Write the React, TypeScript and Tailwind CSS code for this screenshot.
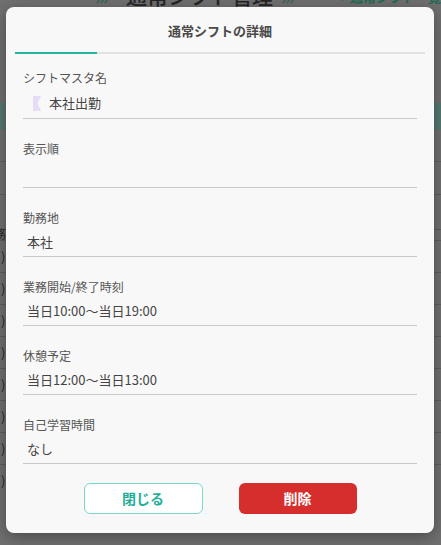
import React from "react";

const fields: { label: string; value: string; icon?: boolean }[] = [
  { label: "シフトマスタ名", value: "本社出勤", icon: true },
  { label: "表示順", value: "" },
  { label: "勤務地", value: "本社" },
  { label: "業務開始/終了時刻", value: "当日10:00〜当日19:00" },
  { label: "休憩予定", value: "当日12:00〜当日13:00" },
  { label: "自己学習時間", value: "なし" },
];

function Chevrons() {
  return (
    <svg width="28" height="8" viewBox="0 0 28 8" className="mb-[1px]">
      <path d="M4 8 L10 0 M12 8 L18 0 M20 8 L26 0" stroke="#3b6656" strokeWidth="3" />
    </svg>
  );
}

export default function App() {
  const rows = [293, 327, 358, 392, 425, 457, 490, 522];
  return (
    <div className="relative w-[441px] h-[545px] overflow-hidden bg-[#707070] font-['Noto_Sans_CJK_JP','Noto_Sans',sans-serif]">
      {/* dimmed background page */}
      <div className="flex flex-col">
        <div className="h-[7px] overflow-hidden flex items-start">
          <div className="flex items-end -mt-[16px] w-full">
            <div className="w-[95px] shrink-0" />
            <Chevrons />
            <div className="w-[17px] shrink-0" />
            <span className="text-[21px] leading-[22px] text-[#262626] font-medium whitespace-nowrap">通常シフト管理</span>
            <div className="w-[8px] shrink-0" />
            <Chevrons />
            <div className="w-[44px] shrink-0" />
            <span className="text-[13px] leading-[18px] text-[#1f6b55] font-bold whitespace-nowrap">↩通常シフト一覧</span>
          </div>
        </div>
        <div className="h-[96px]" />
        <div className="h-[27px] bg-[#587770]" />
        <div className="h-[32px] border-b border-[#5e5e5e]" />
        <div className="h-[33px] border-b border-[#5e5e5e]" />
        <div className="h-[35px] border-b border-[#5e5e5e]" />
        <div className="h-[10px] flex items-end">
          <span className="text-[12px] leading-[12px] text-[#2a2a2a] -ml-[6px]">務</span>
        </div>
        {rows.map((r) => (
          <div key={r} className="h-[32px] border-t border-[#5e5e5e] flex items-center">
            <span className="text-[13px] text-[#2a2a2a] pl-[1px]">)</span>
          </div>
        ))}
      </div>

      {/* modal */}
      <div className="absolute left-[6px] top-[7px] w-[428px] h-[526px] rounded-[8px] bg-[#f8f8f8] shadow-[0_4px_16px_rgba(0,0,0,0.35)] flex flex-col">
        <div className="h-[45px] pt-[3px] flex items-center justify-center">
          <span className="text-[13px] font-bold text-[#4a4a4a]">通常シフトの詳細</span>
        </div>
        <div className="mx-[9px] h-[2px] flex">
          <div className="w-[82px] bg-[#22b59c]" />
          <div className="flex-1 bg-[#e2e2e2]" />
        </div>
        <div className="mt-[15px] mx-[17px] flex flex-col gap-[21px]">
          {fields.map((f, i) => (
            <div key={f.label} className={`flex flex-col border-b border-[#c9c9c9] ${i === 0 ? "pb-[5px]" : "pb-[4px]"}`}>
              <div className="h-[18px] leading-[18px] text-[12px] text-[#555555]">{f.label}</div>
              <div className={`h-[20px] leading-[20px] text-[13px] text-[#444444] flex items-center ${i === 0 ? "mt-[6px] pl-[10px]" : "mt-[5px] pl-[4px]"}`}>
                {f.icon && (
                  <svg width="8" height="15" viewBox="0 0 8 15" className="mr-[8px]">
                    <polygon points="0,0 8,0 4.5,7.5 8,15 0,15" fill="#e7dbf5" />
                  </svg>
                )}
                <span>{f.value}</span>
              </div>
            </div>
          ))}
        </div>
        <div className="mt-[19px] flex justify-center gap-[36px]">
          <button className="w-[119px] h-[31px] rounded-[6px] border-[1.5px] border-[#78d8ca] bg-white text-[14px] font-bold text-[#1fae98]">
            閉じる
          </button>
          <button className="w-[118px] h-[31px] rounded-[6px] bg-[#d62d2d] text-[14px] font-bold text-white">
            削除
          </button>
        </div>
      </div>
    </div>
  );
}
